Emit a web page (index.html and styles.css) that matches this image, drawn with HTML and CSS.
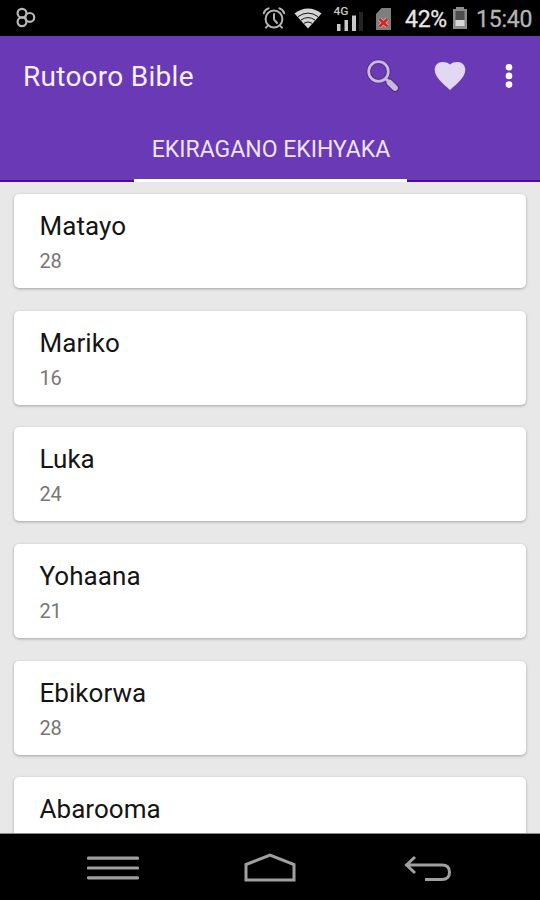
FILE: index.html
```html
<!DOCTYPE html>
<html lang="ttj">
<head>
<meta charset="utf-8">
<title>Rutooro Bible</title>
<link rel="stylesheet" href="styles.css">
</head>
<body>
<div class="screen">
  <div class="status">
    <svg class="app-mark" width="22" height="22" viewBox="0 0 22 22" fill="none" stroke="#b8b8b8" stroke-width="2.2"><circle cx="7" cy="6.2" r="4.4"/><circle cx="7" cy="14.8" r="4.4"/><circle cx="14.8" cy="10.4" r="4.4"/></svg>
    <svg class="alarm" width="24" height="24" viewBox="0 0 24 24" fill="none" stroke="#b4b4b4" stroke-width="2" stroke-linecap="round"><circle cx="12" cy="13" r="8.4"/><path d="M12 8v5.4l3 3.6M1.8 7.2Q2.8 3.6 6.6 2.4M22.2 7.2Q21.2 3.6 17.4 2.4M6 19.6l-2 2M18 19.6l2 2"/></svg>
    <svg class="wifi" width="28" height="22" viewBox="0 0 28 22"><path d="M0.5 6.5Q14-3.5 27.5 6.5L14 21.5z" fill="#d4d4d4"/><path d="M4 9.6Q14 2.6 24 9.6M7 13Q14 8.2 21 13M10 16.2Q14 13.6 18 16.2" fill="none" stroke="#151515" stroke-width="1"/></svg>
    <svg class="signal" width="32" height="28" viewBox="0 0 32 28"><text class="net" x="0.5" y="11" textLength="15" lengthAdjust="spacingAndGlyphs">4G</text><path fill="#c9c9c9" d="M4 20h3.5v7H4zM11.5 16H15v11h-3.5zM19 11.5h4V27h-4z"/><path fill="#242424" d="M26 8h4v19h-4z"/></svg>
    <svg class="sim" width="16" height="22" viewBox="0 0 16 22"><path fill="#7e7e7e" d="M5.5 0H15v22H0V6z"/><path d="M3.500 11l8 7.500M11.500 11l-8 7.500" fill="none" stroke="#e2b4b4" stroke-width="3.8"/><path d="M3.500 11l8 7.500M11.500 11l-8 7.500" fill="none" stroke="#d32323" stroke-width="2.5"/></svg>
    <span class="percent">42%</span>
    <svg class="battery" width="16" height="24" viewBox="0 0 16 24"><path fill="#8c8c8c" d="M4 1h8v2h3v20H1V3h3z"/><path fill="#4e4e4e" d="M3.5 5h9v9h-9z"/><path fill="#d6d6d6" d="M3.5 14h9v6h-9z"/></svg>
    <span class="clock">15:40</span>
  </div>
  <header class="appbar">
    <div class="toolbar">
      <h1 class="title">Rutooro Bible</h1>
      <svg class="search" width="36" height="36" viewBox="0 0 36 36" fill="none"><circle cx="12.5" cy="12.5" r="9.8" stroke="#50307e" stroke-width="4.6"/><path d="M19.5 19.5l4 4" stroke="#50307e" stroke-width="5"/><path d="M23.5 23.5l5.5 5.5" stroke="#50307e" stroke-width="8" stroke-linecap="round"/><circle cx="12.5" cy="12.5" r="9.8" stroke="#cbb9e1" stroke-width="2.7"/><path d="M19.5 19.5l4 4" stroke="#cbb9e1" stroke-width="3"/><path d="M23.5 23.5l5.5 5.5" stroke="#cbb9e1" stroke-width="5.8" stroke-linecap="round"/></svg>
      <svg class="heart" width="32" height="30" viewBox="0 0 32 30"><path fill="#e2d8f1" d="M16 29C9 22.5 0.7 16.5 0.7 8.8C0.7 4.2 4 1 8.5 1C11.5 1 14.3 1.8 16 3.5C17.7 1.8 20.5 1 23.5 1C28 1 31.3 4.2 31.3 8.8C31.3 16.5 23 22.5 16 29z"/></svg>
      <svg class="more" width="8" height="26" viewBox="0 0 8 26" fill="#fff"><circle cx="4" cy="4.2" r="3.3"/><circle cx="4" cy="12.9" r="3.3"/><circle cx="4" cy="21.6" r="3.3"/></svg>
    </div>
    <div class="tabs"><div class="tab">EKIRAGANO EKIHYAKA</div></div>
  </header>
  <main class="list">
    <div class="card"><div class="book">Matayo</div><div class="count">28</div></div>
    <div class="card"><div class="book">Mariko</div><div class="count">16</div></div>
    <div class="card"><div class="book">Luka</div><div class="count">24</div></div>
    <div class="card"><div class="book">Yohaana</div><div class="count">21</div></div>
    <div class="card"><div class="book">Ebikorwa</div><div class="count">28</div></div>
    <div class="card"><div class="book">Abarooma</div></div>
  </main>
  <nav class="nav">
    <svg class="menu" width="52" height="26" viewBox="0 0 52 26" fill="none" stroke="#a0a0a0" stroke-width="3.2" stroke-linecap="round"><path d="M1.5 3.2h49M1.5 13h49M1.5 22.8h49"/></svg>
    <svg class="home" width="52" height="30" viewBox="0 0 52 30" fill="none" stroke="#a0a0a0" stroke-width="3"><path d="M2 11.5L26 2.2L50 11.5V27H2z"/></svg>
    <svg class="back" width="48" height="28" viewBox="0 0 48 28" fill="none" stroke="#a0a0a0" stroke-width="3"><path d="M11 2L2.5 10L11 18M3 10H38Q45.5 10 45.5 17.2T38 24.4H21"/></svg>
  </nav>
</div>
</body>
</html>
```
FILE: styles.css
```css
* { box-sizing: border-box; }
body { margin: 0; font-family: Roboto, "Liberation Sans", sans-serif; }
.screen { width: 540px; height: 900px; display: flex; flex-direction: column; overflow: hidden; background: #e8e8e8; }
svg { display: block; flex: none; }

.status { height: 36px; flex: none; display: flex; align-items: center; background: #000; color: #c4c4c4; font-size: 24px; line-height: 36px; white-space: nowrap; }
.app-mark { margin-left: 15px; }
.alarm { margin-left: 225px; }
.wifi { margin-left: 8px; }
.signal { margin: -1px 0 0 11px; }
.net { font-size: 11px; font-weight: 500; fill: #c9c9c9; }
.sim { margin: 1px 0 0 11px; }
.percent { width: 42px; margin: 3px 0 0 13px; color: #e6e6e6; font-size: 23px; letter-spacing: -0.3px; -webkit-text-stroke: 0.3px #e6e6e6; }
.battery { margin: -1px 0 0 5px; }
.clock { margin: 3px 0 0 8px; color: #b4b4b4; font-size: 23px; letter-spacing: -0.2px; -webkit-text-stroke: 0.3px #b4b4b4; }

.appbar { height: 146px; flex: none; display: flex; flex-direction: column; background: #6a39b5; box-shadow: inset 0 -2px #5209a0; }
.toolbar { height: 80px; display: flex; align-items: center; padding-left: 23px; }
.title { width: 343px; margin: 1px 0 0; color: #f5effc; font-size: 28px; line-height: 32px; font-weight: 400; letter-spacing: 0.27px; white-space: nowrap; }
.search { margin-top: 1px; }
.heart { margin: -1px 0 0 32px; }
.more { margin: -1px 0 0 39px; }
.tabs { height: 66px; display: flex; justify-content: center; }
.tab { width: 273px; height: 66px; flex: none; padding: 17px 0 0 2px; border-bottom: 3px solid #fff; color: #eee4f8; font-size: 23px; line-height: 34px; text-align: center; white-space: nowrap; }

.list { height: 652px; flex: none; display: flex; flex-direction: column; gap: 22.7px; padding: 12px 14px 0; overflow: hidden; border-bottom: 1px solid #8a8a8a; }
.card { height: 94px; flex: none; padding: 15px 25.5px 0; border-radius: 5px; background: #fff; box-shadow: 0 1px 3px rgba(0, 0, 0, 0.3); }
.book { color: #151515; font-size: 26px; line-height: 34px; letter-spacing: 0.05px; }
.count { margin-top: 4px; color: #777; font-size: 20px; line-height: 28px; letter-spacing: -0.2px; }

.nav { height: 66px; flex: none; display: flex; align-items: center; background: #000; }
.menu { margin-left: 87px; margin-top: 2px; }
.home { margin-left: 105px; margin-top: 1px; }
.back { margin-left: 108px; margin-top: 4px; }
```
